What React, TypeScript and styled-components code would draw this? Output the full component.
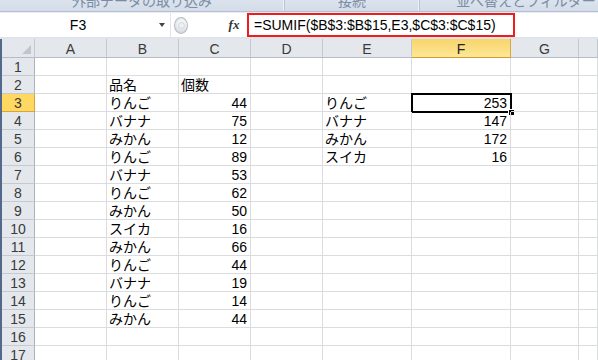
import { Fragment } from 'react';
import styled, { createGlobalStyle } from 'styled-components';

const GlobalStyle = createGlobalStyle`
  html, body {
    margin: 0;
    padding: 0;
    background: #ffffff;
  }
  body {
    width: 598px;
    height: 360px;
    overflow: hidden;
    font-family: "Liberation Sans", "Noto Sans CJK JP", sans-serif;
  }
`;

const Window = styled.div`
  width: 598px;
  height: 360px;
  overflow: hidden;
  display: flex;
  flex-direction: column;
  background: #e9edf2;
`;

const Ribbon = styled.div`
  height: 11px;
  display: flex;
  background: linear-gradient(#dbe3ee, #d3dce8);
  border-bottom: 1px solid #b4c1d1;
  flex-shrink: 0;
`;

const RibbonGroup = styled.div<{ $width: number }>`
  width: ${(p) => p.$width}px;
  flex-shrink: 0;
  overflow: hidden;
  display: flex;
  justify-content: center;
  border-right: 1px solid #b9c5d4;
  box-shadow: inset -1px 0 0 #eef2f7;
`;

// group captions are scrolled off: only their lower half shows
const GroupLabel = styled.span`
  margin-top: -8px;
  font-family: "Noto Sans CJK JP", sans-serif;
  font-size: 14px;
  line-height: 17px;
  color: #7b8ca3;
  white-space: nowrap;
`;

const FormulaBar = styled.div`
  height: 24px;
  margin-top: 1px;
  display: flex;
  align-items: stretch;
  background: #ffffff;
  flex-shrink: 0;
`;

const NameBox = styled.div`
  width: 170px;
  position: relative;
  display: flex;
  align-items: center;
  justify-content: center;
  font-size: 14px;
  color: #000;
  border-right: 1px solid #e2e6ea;
`;

const NameText = styled.span`
  margin-left: -14px;
`;

const DropArrow = styled.span`
  position: absolute;
  right: 5px;
  top: 10px;
  width: 0;
  height: 0;
  border-left: 3.5px solid transparent;
  border-right: 3.5px solid transparent;
  border-top: 4px solid #444;
`;

const Splitter = styled.div`
  width: 58px;
  display: flex;
  align-items: center;
  padding-left: 3px;
  box-sizing: border-box;
  background: #ffffff;
`;

const Knob = styled.div`
  width: 12px;
  height: 15px;
  border-radius: 50%;
  border: 1px solid #b6bcc4;
  background: radial-gradient(circle at 55% 40%, #f4f5f7 0 30%, #d7dbe0 70%, #c9ced5 100%);
  display: flex;
  align-items: center;
  justify-content: center;
`;

const KnobMark = styled.div`
  width: 5px;
  height: 5px;
  border-radius: 50%;
  background: #eef0f3;
  border: 1px solid #d0d4da;
`;

const FxButton = styled.div`
  width: 18px;
  display: flex;
  align-items: center;
  justify-content: center;
  font-family: "Liberation Serif", serif;
  font-style: italic;
  font-weight: bold;
  font-size: 13px;
  color: #333;
  margin-left: -4px;
  margin-right: 4px;
`;

const FormulaInput = styled.div`
  flex: 1;
  display: flex;
  align-items: stretch;
  background: #ffffff;
`;

const FormulaMark = styled.div`
  width: 268px;
  border: 2px solid #ee1c1c;
  box-sizing: border-box;
  display: flex;
  align-items: center;
  padding-left: 5px;
  font-size: 14px;
  color: #000;
  white-space: nowrap;
`;

const Spacer = styled.div`
  height: 2px;
  flex-shrink: 0;
  background: #dfe4ea;
`;

const Sheet = styled.div`
  display: grid;
  grid-template-columns: 33px 72px 72px 72px 72px 89px 99px 68px 1fr;
  grid-template-rows: 19px;
  grid-auto-rows: 18px;
  border-left: 2px solid #52698c;
  background: #ffffff;
`;

const Corner = styled.div`
  background: #e4e7eb;
  border-right: 1px solid #c3c8cf;
  border-bottom: 1px solid #b5bcc6;
  display: flex;
  align-items: flex-end;
  justify-content: flex-end;
  padding: 0 3px 3px 0;
`;

const CornerTriangle = styled.div`
  width: 0;
  height: 0;
  border-left: 9px solid transparent;
  border-bottom: 9px solid #c2c6cc;
`;

const ColHeader = styled.div<{ $selected?: boolean }>`
  display: flex;
  align-items: center;
  justify-content: center;
  font-size: 14px;
  color: ${(p) => (p.$selected ? '#222' : '#3a3a3a')};
  background: ${(p) => (p.$selected ? 'linear-gradient(#f8d46c, #fee796)' : '#e4e7eb')};
  border-right: 1px solid ${(p) => (p.$selected ? '#d9a640' : '#c3c8cf')};
  border-bottom: 1px solid ${(p) => (p.$selected ? '#d49a2e' : '#b5bcc6')};
  padding-top: 1px;
`;

const RowHeader = styled.div<{ $selected?: boolean }>`
  display: flex;
  align-items: center;
  justify-content: center;
  font-size: 14px;
  color: #3a3a3a;
  background: ${(p) => (p.$selected ? '#ffd862' : '#e4e7eb')};
  border-right: 1px solid ${(p) => (p.$selected ? '#d9a23a' : '#aab3bf')};
  border-bottom: 1px solid ${(p) => (p.$selected ? '#d9a23a' : '#c5cad1')};
  padding-top: 1px;
`;

const Cell = styled.div<{ $right?: boolean }>`
  position: relative;
  border-right: 1px solid #dadcdd;
  border-bottom: 1px solid #dadcdd;
  font-size: 14px;
  line-height: 17px;
  padding: 1px 3px 0 2px;
  text-align: ${(p) => (p.$right ? 'right' : 'left')};
  color: #000;
  white-space: nowrap;
`;

const ActiveFrame = styled.div`
  position: absolute;
  top: -1px;
  left: -1px;
  right: -2px;
  bottom: -2px;
  border: 2px solid #000;
  pointer-events: none;
`;

const FillHandle = styled.div`
  position: absolute;
  right: -4px;
  bottom: -4px;
  width: 5px;
  height: 5px;
  background: #000;
  border-left: 1px solid #fff;
  border-top: 1px solid #fff;
`;

const columns = ['A', 'B', 'C', 'D', 'E', 'F', 'G', ''];

type Row = (string | number)[];

const rows: Row[] = [
  ['', '', '', '', '', '', '', ''],
  ['', '品名', '個数', '', '', '', '', ''],
  ['', 'りんご', 44, '', 'りんご', 253, '', ''],
  ['', 'バナナ', 75, '', 'バナナ', 147, '', ''],
  ['', 'みかん', 12, '', 'みかん', 172, '', ''],
  ['', 'りんご', 89, '', 'スイカ', 16, '', ''],
  ['', 'バナナ', 53, '', '', '', '', ''],
  ['', 'りんご', 62, '', '', '', '', ''],
  ['', 'みかん', 50, '', '', '', '', ''],
  ['', 'スイカ', 16, '', '', '', '', ''],
  ['', 'みかん', 66, '', '', '', '', ''],
  ['', 'りんご', 44, '', '', '', '', ''],
  ['', 'バナナ', 19, '', '', '', '', ''],
  ['', 'りんご', 14, '', '', '', '', ''],
  ['', 'みかん', 44, '', '', '', '', ''],
  ['', '', '', '', '', '', '', ''],
  ['', '', '', '', '', '', '', ''],
];

export default function App() {
  return (
    <>
      <GlobalStyle />
      <Window>
        <Ribbon>
          <RibbonGroup $width={284}>
            <GroupLabel>外部データの取り込み</GroupLabel>
          </RibbonGroup>
          <RibbonGroup $width={134}>
            <GroupLabel>接続</GroupLabel>
          </RibbonGroup>
          <RibbonGroup $width={212}>
            <GroupLabel>並べ替えとフィルター</GroupLabel>
          </RibbonGroup>
        </Ribbon>

        <FormulaBar>
          <NameBox>
            <NameText>F3</NameText>
            <DropArrow />
          </NameBox>
          <Splitter>
            <Knob>
              <KnobMark />
            </Knob>
          </Splitter>
          <FxButton>fx</FxButton>
          <FormulaInput>
            <FormulaMark>=SUMIF($B$3:$B$15,E3,$C$3:$C$15)</FormulaMark>
          </FormulaInput>
        </FormulaBar>
        <Spacer />

        <Sheet>
          <Corner>
            <CornerTriangle />
          </Corner>
          {columns.map((c, i) => (
            <ColHeader key={i} $selected={c === 'F'}>
              {c}
            </ColHeader>
          ))}
          {rows.map((row, r) => (
            <Fragment key={r}>
              <RowHeader $selected={r === 2}>{r + 1}</RowHeader>
              {row.map((v, c) => (
                <Cell key={c} $right={typeof v === 'number'}>
                  {v}
                  {r === 2 && c === 5 && (
                    <ActiveFrame>
                      <FillHandle />
                    </ActiveFrame>
                  )}
                </Cell>
              ))}
            </Fragment>
          ))}
        </Sheet>
      </Window>
    </>
  );
}
